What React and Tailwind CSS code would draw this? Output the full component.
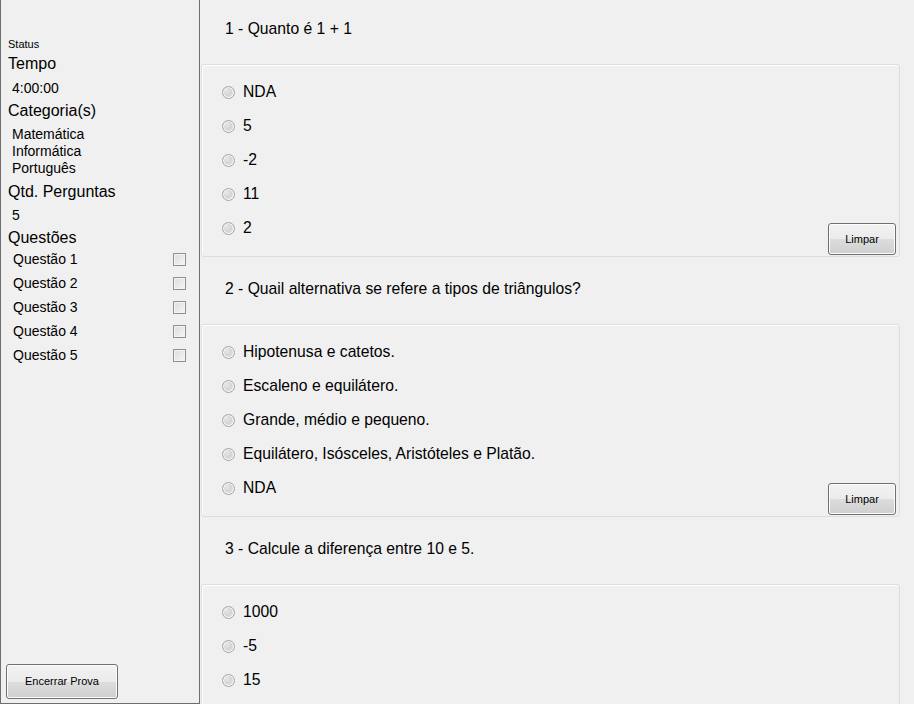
import React from 'react';

const questions = [
  {
    title: '1 - Quanto é 1 + 1',
    options: ['NDA', '5', '-2', '11', '2'],
    clear: true
  },
  {
    title: '2 - Quail alternativa se refere a tipos de triângulos?',
    options: [
      'Hipotenusa e catetos.',
      'Escaleno e equilátero.',
      'Grande, médio e pequeno.',
      'Equilátero, Isósceles, Aristóteles e Platão.',
      'NDA'
    ],
    clear: true
  },
  {
    // só o que cabe na janela
    title: '3 - Calcule a diferença entre 10 e 5.',
    options: ['1000', '-5', '15'],
    clear: false
  }
];

const winButton =
  'border border-[#707070] rounded-[3px] bg-[linear-gradient(to_bottom,#f2f2f2_0%,#ebebeb_50%,#dddddd_50%,#cfcfcf_100%)] shadow-[inset_0_0_0_1px_#fcfcfc] text-[11px] text-black flex items-center justify-center';

function Radio() {
  return (
    <span className="w-[13px] h-[13px] rounded-full border border-[#a5a5a5] bg-[radial-gradient(circle_at_35%_35%,#e8e8e8_0%,#d4d4d4_45%,#f4f4f4_100%)] shadow-[inset_0_0_0_1px_#f6f6f6] shrink-0" />
  );
}

function CheckBox() {
  return (
    <span className="w-[13px] h-[13px] border border-[#8e8f8f] bg-[linear-gradient(135deg,#dcdcdc_0%,#f6f6f6_100%)] shadow-[inset_0_0_0_1px_#f4f4f4] shrink-0" />
  );
}

function QuestionBlock({ q }) {
  return (
    <div className="mb-[3px]">
      <div className="h-[64px] pl-[25px] pt-[19px] text-[15.7px] leading-[20px]">{q.title}</div>
      <div className="ml-[1px] w-[699px] h-[193px] border border-[#d5dfe5] rounded-[3px] shadow-[inset_1px_1px_0_#ffffff] flex">
        <div className="flex-1 pt-[10px] pl-[20px]">
          {q.options.map((o) => (
            <div key={o} className="h-[34px] flex items-center gap-[8px] text-[15.7px]">
              <Radio />
              <span>{o}</span>
            </div>
          ))}
        </div>
        {q.clear && (
          <button className={`${winButton} self-end w-[68px] h-[32px] mb-[1px] mr-[3px]`}>Limpar</button>
        )}
      </div>
    </div>
  );
}

export default function App() {
  return (
    <div className="w-[914px] h-[704px] flex overflow-hidden bg-[#f0f0f0] text-black font-['Liberation_Sans',Arial,sans-serif]">
      {/* Painel lateral */}
      <div className="w-[200px] h-full border-l border-r border-b border-[#6e6e6e] flex flex-col shrink-0">
        <div className="pl-[7px]">
          <div className="mt-[37px] h-[14px] leading-[14px] text-[11px]">Status</div>
          <div className="mt-[3px] h-[20px] leading-[20px] text-[16px]">Tempo</div>
          <div className="mt-[6px] h-[16px] leading-[16px] text-[14px] pl-[4px]">4:00:00</div>
          <div className="mt-[5px] h-[20px] leading-[20px] text-[16px]">Categoria(s)</div>
          <div className="mt-[5px] pl-[4px] text-[14px] leading-[17px]">
            <div>Matemática</div>
            <div>Informática</div>
            <div>Português</div>
          </div>
          <div className="mt-[5px] h-[20px] leading-[20px] text-[16px]">Qtd. Perguntas</div>
          <div className="mt-[5px] h-[16px] leading-[16px] text-[14px] pl-[4px]">5</div>
          <div className="mt-[5px] h-[20px] leading-[20px] text-[16px]">Questões</div>
          <div className="pl-[5px] pr-[13px] -mt-[1px]">
            {[1, 2, 3, 4, 5].map((n) => (
              <div key={n} className="h-[24px] flex items-center justify-between text-[14px]">
                <span>Questão {n}</span>
                <CheckBox />
              </div>
            ))}
          </div>
        </div>
        <button className={`${winButton} mt-auto mb-[4px] ml-[5px] w-[112px] h-[35px]`}>Encerrar Prova</button>
      </div>

      {/* Questões */}
      <div className="flex-1 h-full overflow-hidden">
        {questions.map((q) => (
          <QuestionBlock key={q.title} q={q} />
        ))}
      </div>
    </div>
  );
}
